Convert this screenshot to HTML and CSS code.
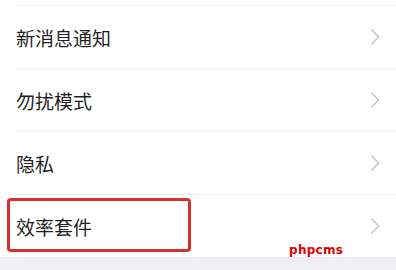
FILE: index.html
```html
<!DOCTYPE html>
<html lang="zh">
<head>
<meta charset="utf-8">
<link rel="stylesheet" href="styles.css">
</head>
<body>
<div class="page">
  <div class="top"></div>
  <div class="row"><span class="label">新消息通知</span><svg class="chev" viewBox="0 0 10 18"><path d="M1.5 1.5 L8.5 9 L1.5 16.5"/></svg></div>
  <div class="row"><span class="label">勿扰模式</span><svg class="chev" viewBox="0 0 10 18"><path d="M1.5 1.5 L8.5 9 L1.5 16.5"/></svg></div>
  <div class="row"><span class="label">隐私</span><svg class="chev" viewBox="0 0 10 18"><path d="M1.5 1.5 L8.5 9 L1.5 16.5"/></svg></div>
  <div class="row last"><span class="label">效率套件</span><svg class="chev" viewBox="0 0 10 18"><path d="M1.5 1.5 L8.5 9 L1.5 16.5"/></svg><div class="highlight"></div><span class="mark">phpcms</span></div>
  <div class="footer"></div>
</div>
</body>
</html>
```
FILE: styles.css
```css
html, body {
  margin: 0;
  padding: 0;
  background: #fff;
}
.page {
  width: 396px;
  height: 270px;
  overflow: hidden;
  display: flex;
  flex-direction: column;
  font-family: "Noto Sans CJK SC", "Noto Sans", sans-serif;
}
.top {
  height: 5px;
  margin-left: 16px;
  border-bottom: 1px solid #ececec;
  flex: none;
}
.row {
  position: relative;
  height: 62px;
  flex: none;
  display: flex;
  align-items: center;
  justify-content: space-between;
  margin-left: 16px;
  padding-right: 16px;
  border-bottom: 1px solid #ececec;
}
.row.last {
  border-bottom: none;
}
.label {
  font-size: 19px;
  color: #1f1f1f;
  line-height: 1;
}
.chev {
  width: 10px;
  height: 18px;
  fill: none;
  stroke: #c4c4c4;
  stroke-width: 1.4;
}
.highlight {
  position: absolute;
  left: -9px;
  top: 3px;
  width: 178px;
  height: 48px;
  border: 3px solid #d8302b;
  border-radius: 4px;
}
.mark {
  position: absolute;
  left: 273px;
  top: 49px;
  font-family: "DejaVu Sans", sans-serif;
  font-weight: bold;
  font-size: 12px;
  line-height: 1;
  color: #e00000;
  letter-spacing: 0.3px;
}
.footer {
  flex: 1;
  background: #f0f0f4;
}
```
